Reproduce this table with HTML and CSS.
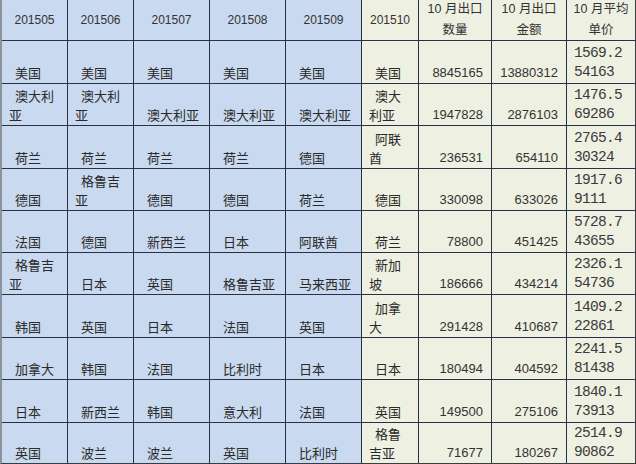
FILE: index.html
```html
<!DOCTYPE html>
<html lang="zh">
<head>
<meta charset="utf-8">
<link rel="stylesheet" href="styles.css">
</head>
<body>
<div class="sheet">
  <div class="c b h">201505</div><div class="c b h">201506</div><div class="c b h">201507</div><div class="c b h">201508</div><div class="c b h">201509</div><div class="c y h">201510</div><div class="c y h hz">10 月出口<br>数量</div><div class="c y h hz">10 月出口<br>金额</div><div class="c y h hz">10 月平均<br>单价</div>

  <div class="c b t">美国</div><div class="c b t">美国</div><div class="c b t">美国</div><div class="c b t">美国</div><div class="c b t">美国</div><div class="c y t">美国</div><div class="c y n">8845165</div><div class="c y n">13880312</div><div class="c y d">1569.2<br>54163</div>

  <div class="c b t">澳大利<br>亚</div><div class="c b t">澳大利<br>亚</div><div class="c b t">澳大利亚</div><div class="c b t">澳大利亚</div><div class="c b t">澳大利亚</div><div class="c y t">澳大<br>利亚</div><div class="c y n">1947828</div><div class="c y n">2876103</div><div class="c y d">1476.5<br>69286</div>

  <div class="c b t">荷兰</div><div class="c b t">荷兰</div><div class="c b t">荷兰</div><div class="c b t">荷兰</div><div class="c b t">德国</div><div class="c y t">阿联<br>酋</div><div class="c y n">236531</div><div class="c y n">654110</div><div class="c y d">2765.4<br>30324</div>

  <div class="c b t">德国</div><div class="c b t">格鲁吉<br>亚</div><div class="c b t">德国</div><div class="c b t">德国</div><div class="c b t">荷兰</div><div class="c y t">德国</div><div class="c y n">330098</div><div class="c y n">633026</div><div class="c y d">1917.6<br>9111</div>

  <div class="c b t">法国</div><div class="c b t">德国</div><div class="c b t">新西兰</div><div class="c b t">日本</div><div class="c b t">阿联酋</div><div class="c y t">荷兰</div><div class="c y n">78800</div><div class="c y n">451425</div><div class="c y d">5728.7<br>43655</div>

  <div class="c b t">格鲁吉<br>亚</div><div class="c b t">日本</div><div class="c b t">英国</div><div class="c b t">格鲁吉亚</div><div class="c b t">马来西亚</div><div class="c y t">新加<br>坡</div><div class="c y n">186666</div><div class="c y n">434214</div><div class="c y d">2326.1<br>54736</div>

  <div class="c b t">韩国</div><div class="c b t">英国</div><div class="c b t">日本</div><div class="c b t">法国</div><div class="c b t">英国</div><div class="c y t">加拿<br>大</div><div class="c y n">291428</div><div class="c y n">410687</div><div class="c y d">1409.2<br>22861</div>

  <div class="c b t">加拿大</div><div class="c b t">韩国</div><div class="c b t">法国</div><div class="c b t">比利时</div><div class="c b t">日本</div><div class="c y t">日本</div><div class="c y n">180494</div><div class="c y n">404592</div><div class="c y d">2241.5<br>81438</div>

  <div class="c b t">日本</div><div class="c b t">新西兰</div><div class="c b t">韩国</div><div class="c b t">意大利</div><div class="c b t">法国</div><div class="c y t">英国</div><div class="c y n">149500</div><div class="c y n">275106</div><div class="c y d">1840.1<br>73913</div>

  <div class="c b t">英国</div><div class="c b t">波兰</div><div class="c b t">波兰</div><div class="c b t">英国</div><div class="c b t">比利时</div><div class="c y t">格鲁<br>吉亚</div><div class="c y n">71677</div><div class="c y n">180267</div><div class="c y d">2514.9<br>90862</div>
</div>
</body>
</html>
```

FILE: styles.css
```css
html, body {
  margin: 0;
  padding: 0;
  background: #eef0e2;
}
body {
  width: 636px;
  height: 464px;
  overflow: hidden;
}
.sheet {
  box-sizing: border-box;
  width: 636px;
  height: 464px;
  display: grid;
  grid-template-columns: 65px 65px 75px 75px 75px 56px 72px 74px 68px;
  grid-template-rows: 40px 42px 41px 42px 41px 41px 41px 42px 41px 42px 40px;
  column-gap: 1px;
  row-gap: 1px;
  background: #2a3147;
  border-left: 2px solid #8d939c;
  border-right: 1px solid #3a3d40;
  border-bottom: 1px solid #3a3d40;
  font-family: "Noto Sans CJK SC", "Liberation Sans", sans-serif;
  font-size: 13px;
  color: #2a2a2a;
}
.c {
  display: flex;
  flex-direction: column;
  justify-content: flex-end;
  overflow: hidden;
  white-space: nowrap;
  line-height: 19px;
  padding-bottom: 1px;
  box-sizing: border-box;
}
.b { background: #c9d9ef; }
.y { background: #eef0e2; }
.h {
  justify-content: center;
  align-items: center;
  text-align: center;
  padding-bottom: 0;
  line-height: 20px;
  font-family: "Liberation Sans", "Noto Sans CJK SC", sans-serif;
  font-size: 12px;
  color: #333;
}
.hz {
  font-size: 12.5px;
  line-height: 21px;
}
.t {
  padding-left: 7px;
  text-indent: 6px;
}
.n {
  text-align: right;
  padding-right: 8px;
  font-family: "Liberation Sans", sans-serif;
  font-size: 13px;
  color: #333;
}
.d {
  padding-left: 7px;
  font-family: "Liberation Mono", monospace;
  font-size: 14.5px;
  letter-spacing: -0.7px;
  color: #3a3a3a;
}
```
